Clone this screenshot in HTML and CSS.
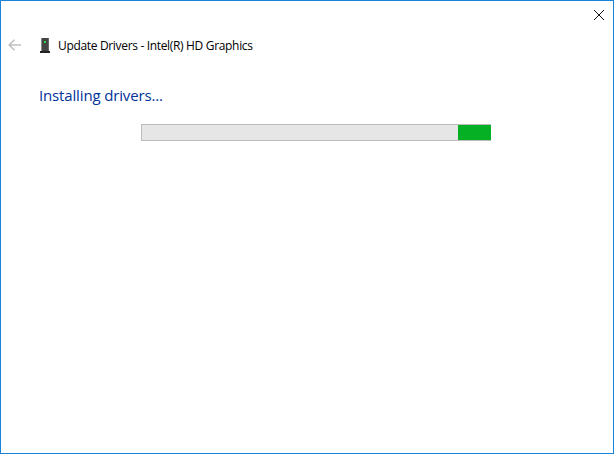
FILE: index.html
```html
<!DOCTYPE html>
<html lang="en">
<head>
<meta charset="utf-8">
<title>Update Drivers</title>
<link rel="stylesheet" href="styles.css">
</head>
<body>
<div class="window">
  <div class="titlebar">
    <svg class="close" width="10" height="10" viewBox="0 0 10 10"><path d="M0 0L10 10M10 0L0 10" stroke="#111" stroke-width="1" fill="none"/></svg>
  </div>
  <div class="nav">
    <svg class="back" width="13" height="12" viewBox="0 0 13 12"><path d="M6.5 .8L1.2 6L6.5 11.2M1.2 6H13" stroke="#c0c0c0" stroke-width="1.6" fill="none"/></svg>
    <svg class="device" width="10" height="15" viewBox="0 0 10 15"><rect x="1" y="0" width="8" height="13" fill="#444"/><rect x="1" y="0" width="1" height="13" fill="#888"/><rect x="8" y="0" width="1" height="13" fill="#666"/><rect x="4" y="3" width="2" height="2" fill="#22d845"/><rect x="0" y="13" width="10" height="2" fill="#222"/></svg>
    <span class="nav-title">Update Drivers - Intel(R) HD Graphics</span>
  </div>
  <div class="content">
    <h1 class="heading">Installing drivers...</h1>
    <div class="progress"><div class="progress-fill"></div></div>
  </div>
</div>
</body>
</html>
```
FILE: styles.css
```css
* { box-sizing: border-box; }
html, body { margin: 0; height: 100%; }
.window {
  width: 614px;
  height: 454px;
  background: #fff;
  border: 1px solid #1883d7;
  font-family: "Open Sans", "Noto Sans", sans-serif;
  overflow: hidden;
}
.titlebar {
  display: flex;
  justify-content: flex-end;
  padding: 9px 9px 0 0;
  height: 31px;
}
.nav {
  display: flex;
  align-items: center;
  height: 26px;
  padding-left: 7px;
}
.back { margin-right: 19px; }
.device { margin: 1px 8px 0 0; }
.nav-title { font-size: 12px; letter-spacing: -0.33px; color: #000; white-space: nowrap; }
.content { padding: 26px 0 0 38px; }
.heading {
  margin: 0;
  font-size: 15px;
  font-weight: 400;
  letter-spacing: -0.15px;
  line-height: 22px;
  color: #003399;
}
.progress {
  display: flex;
  justify-content: flex-end;
  width: 350px;
  height: 17px;
  margin: 18px 0 0 102px;
  background: #e6e6e6;
  border: 1px solid #bcbcbc;
  border-right: 0;
}
.progress-fill { width: 33px; background: #06b025; }
```
